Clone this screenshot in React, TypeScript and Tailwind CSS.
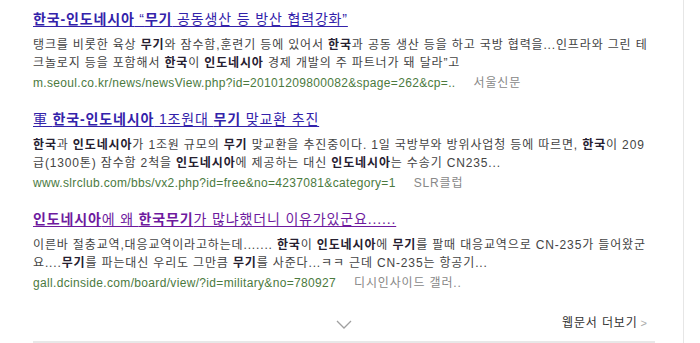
import React from "react";

const KR = '"Liberation Sans", "Noto Sans CJK KR", sans-serif';

function B({ children }: { children: React.ReactNode }) {
  return <b className="font-bold text-[#262030]">{children}</b>;
}
function TB({ children }: { children: React.ReactNode }) {
  return <b className="font-bold">{children}</b>;
}

function Item({
  title,
  visited,
  line1,
  line2,
  url,
  source,
}: {
  title: React.ReactNode;
  visited?: boolean;
  line1: React.ReactNode;
  line2: React.ReactNode;
  url: string;
  source: string;
}) {
  return (
    <div className="flex flex-col">
      <div
        className={
          "text-[14px] leading-[20px] tracking-[0.85px] underline underline-offset-2 whitespace-nowrap " +
          (visited ? "text-[#6e1a9e]" : "text-[#3322aa]")
        }
      >
        {title}
      </div>
      <div className="mt-[7px] text-[12px] leading-[18px] tracking-[0.85px] text-[#444] whitespace-nowrap">
        <div>{line1}</div>
        <div>{line2}</div>
      </div>
      <div className="mt-[1px] flex text-[12px] leading-[20px] whitespace-nowrap">
        <span className="text-[#4b7a3e] tracking-[0.33px]">{url}</span>
        <span className="ml-[18px] text-[#888] tracking-[0.85px]">{source}</span>
      </div>
    </div>
  );
}

export default function App() {
  return (
    <div className="w-[700px] h-[343px] bg-white overflow-hidden flex" style={{ fontFamily: KR }}>
      <div className="w-[684px] h-[343px] border-r border-[#e6e6e6] pl-[33px]">
        <div className="w-[622px] h-[343px] border-b-2 border-[#e8e8e8] pt-[9px] flex flex-col">
          <div className="flex flex-col gap-[16px]">
            <Item
              title={
                <>
                  <TB>한국-인도네시아</TB> “<TB>무기</TB> 공동생산 등 방산 협력강화”
                </>
              }
              line1={
                <>
                  탱크를 비롯한 육상 <B>무기</B>와 잠수함,훈련기 등에 있어서 <B>한국</B>과 공동 생산 등을 하고 국방 협력을...인프라와 그린 테
                </>
              }
              line2={
                <>
                  크놀로지 등을 포함해서 <B>한국</B>이 <B>인도네시아</B> 경제 개발의 주 파트너가 돼 달라”고
                </>
              }
              url="m.seoul.co.kr/news/newsView.php?id=20101209800082&spage=262&cp=.."
              source="서울신문"
            />
            <Item
              title={
                <>
                  軍 <TB>한국-인도네시아</TB> 1조원대 <TB>무기</TB> 맞교환 추진
                </>
              }
              line1={
                <>
                  <B>한국</B>과 <B>인도네시아</B>가 1조원 규모의 <B>무기</B> 맞교환을 추진중이다. 1일 국방부와 방위사업청 등에 따르면, <B>한국</B>이 209
                </>
              }
              line2={
                <>
                  급(1300톤) 잠수함 2척을 <B>인도네시아</B>에 제공하는 대신 <B>인도네시아</B>는 수송기 CN235...
                </>
              }
              url="www.slrclub.com/bbs/vx2.php?id=free&no=4237081&category=1"
              source="SLR클럽"
            />
            <Item
              visited
              title={
                <>
                  <TB>인도네시아</TB>에 왜 <TB>한국무기</TB>가 많냐했더니 이유가있군요......
                </>
              }
              line1={
                <>
                  이른바 절충교역,대응교역이라고하는데....... <B>한국</B>이 <B>인도네시아</B>에 <B>무기</B>를 팔때 대응교역으로 CN-235가 들어왔군
                </>
              }
              line2={
                <>
                  요....<B>무기</B>를 파는대신 우리도 그만큼 <B>무기</B>를 사준다...ㅋㅋ 근데 CN-235는 항공기...
                </>
              }
              url="gall.dcinside.com/board/view/?id=military&no=780927"
              source="디시인사이드 갤러.."
            />
          </div>
          <div className="mt-[19px] relative h-[22px] flex items-center justify-end pr-[8px]">
            <svg
              className="absolute left-[303px] top-[8px]"
              width="16"
              height="9"
              viewBox="0 0 16 9"
              fill="none"
            >
              <path d="M1 1 L8 8 L15 1" stroke="#a0a0a0" strokeWidth="1.3" />
            </svg>
            <span className="text-[12px] text-[#333] leading-[20px] tracking-[0.85px]">웹문서 더보기</span>
            <span className="ml-[3px] text-[11px] text-[#aaa] leading-[20px]">&gt;</span>
          </div>
        </div>
      </div>
    </div>
  );
}
